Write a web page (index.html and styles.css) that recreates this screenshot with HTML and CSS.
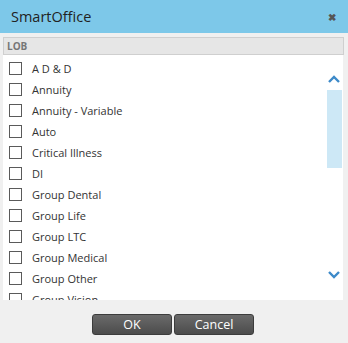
FILE: index.html
```html
<!DOCTYPE html>
<html lang="en">
<head>
    <meta charset="UTF-8">
    <meta name="viewport" content="width=device-width, initial-scale=1.0">
    <title>SmartOffice</title>
    <link rel="stylesheet" href="styles.css">
</head>
<body>
    <div id="dialog">
        <div id="title-bar">
            <span class="title">SmartOffice</span>
            <span class="close">&#x2716;</span>
        </div>
        <div id="content">
            <div class="list-header">LOB</div>
            <div class="list-box">
                <div class="items">
                    <label class="item"><span class="box"></span>A D &amp; D</label>
                    <label class="item"><span class="box"></span>Annuity</label>
                    <label class="item"><span class="box"></span>Annuity - Variable</label>
                    <label class="item"><span class="box"></span>Auto</label>
                    <label class="item"><span class="box"></span>Critical Illness</label>
                    <label class="item"><span class="box"></span>DI</label>
                    <label class="item"><span class="box"></span>Group Dental</label>
                    <label class="item"><span class="box"></span>Group Life</label>
                    <label class="item"><span class="box"></span>Group LTC</label>
                    <label class="item"><span class="box"></span>Group Medical</label>
                    <label class="item"><span class="box"></span>Group Other</label>
                    <label class="item"><span class="box"></span>Group Vision</label>
                </div>
                <div class="scrollbar">
                    <svg class="arrow up" width="12" height="8" viewBox="0 0 12 8">
                        <path d="M1 7 L6 2 L11 7" fill="none" stroke="#3d8ac9" stroke-width="2.4"/>
                    </svg>
                    <div class="thumb"></div>
                    <div class="track"></div>
                    <svg class="arrow down" width="12" height="8" viewBox="0 0 12 8">
                        <path d="M1 1 L6 6 L11 1" fill="none" stroke="#3d8ac9" stroke-width="2.4"/>
                    </svg>
                </div>
            </div>
            <div id="buttons">
                <button class="btn">OK</button>
                <button class="btn">Cancel</button>
            </div>
        </div>
    </div>
</body>
</html>
```

FILE: styles.css
```css
html, body {
    margin: 0;
    padding: 0;
}

body {
    font-family: "Open Sans", "Liberation Sans", sans-serif;
    background-color: #f0f0f0;
}

#dialog {
    width: 348px;
    height: 343px;
    display: flex;
    flex-direction: column;
}

#title-bar {
    height: 33px;
    background-color: #7dc8e9;
    display: flex;
    align-items: center;
    justify-content: space-between;
    padding: 0 12px 0 11px;
    box-sizing: border-box;
}

.title {
    font-size: 14.5px;
    color: #222;
}

.close {
    font-size: 10px;
    color: #555;
    font-weight: bold;
}

#content {
    flex: 1;
    padding: 4px 4px 0 3px;
    display: flex;
    flex-direction: column;
}

.list-header {
    height: 16px;
    background-color: #e6e6e6;
    border: 1px solid #cfcfcf;
    font-size: 10px;
    font-weight: bold;
    color: #777;
    padding-left: 3px;
    line-height: 16px;
}

.list-box {
    height: 245px;
    background-color: #fff;
    display: flex;
    overflow: hidden;
    margin-right: 1px;
}

.items {
    flex: 1;
    padding-top: 3px;
}

.item {
    display: flex;
    align-items: center;
    height: 21px;
    font-size: 11px;
    color: #333;
    padding-left: 6px;
}

.box {
    width: 11px;
    height: 11px;
    border: 1px solid #5a5a5a;
    margin-right: 10px;
    flex: none;
}

.scrollbar {
    width: 16px;
    margin-right: 1px;
    display: flex;
    flex-direction: column;
    align-items: center;
    padding-top: 20px;
}

.arrow {
    display: block;
    flex: none;
}

.thumb {
    width: 15px;
    height: 78px;
    margin-top: 7px;
    background-color: #cde8f6;
    flex: none;
}

.track {
    flex: none;
    height: 103px;
}

#buttons {
    display: flex;
    justify-content: center;
    gap: 2px;
    margin-top: 14px;
    padding-right: 1px;
}

.btn {
    width: 80px;
    height: 21px;
    border: 1px solid #3c3c3c;
    border-radius: 3px;
    background: linear-gradient(#6a6a6a, #4c4c4c);
    color: #fff;
    font-family: "Open Sans", "Liberation Sans", sans-serif;
    font-size: 12.5px;
    padding: 0;
    cursor: pointer;
}
```
